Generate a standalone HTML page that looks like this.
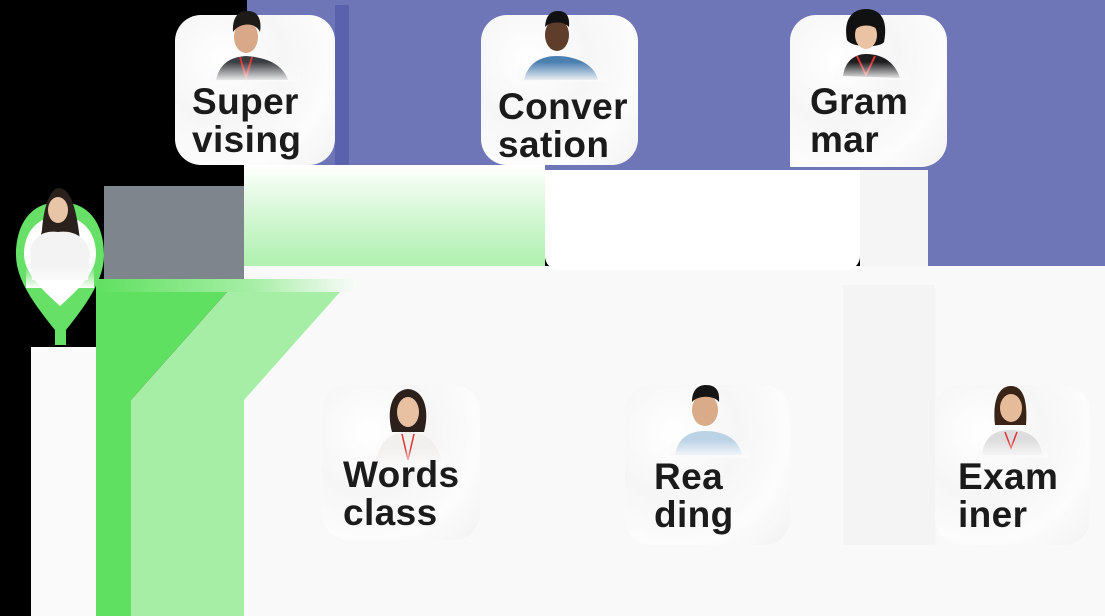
<!DOCTYPE html>
<html><head><meta charset="utf-8">
<style>
html,body{margin:0;padding:0;}
body{width:1105px;height:616px;overflow:hidden;background:#000;position:relative;font-family:"Liberation Sans",sans-serif;}
.a{position:absolute;}
.card{position:absolute;background:#fafafa;border-radius:26px;background-image:radial-gradient(circle at 30% 30%,#fff 0,#f6f6f6 40%,#fcfcfc 70%,#f2f2f2 100%);}
.t{position:absolute;font-weight:bold;font-size:37px;line-height:38px;color:#1b1b1b;letter-spacing:0.4px;}
</style></head><body>
<div class="a" style="left:247px;top:0;width:858px;height:176px;background:#6e76b8"></div>
<div class="a" style="left:928px;top:0;width:177px;height:268px;background:#6e76b8"></div>
<div class="a" style="left:335px;top:5px;width:14px;height:165px;background:#5a61ad"></div>
<div class="a" style="left:104px;top:186px;width:150px;height:93px;background:#7f858c;border-radius:0 0 8px 0"></div>
<div class="a" style="left:244px;top:165px;width:301px;height:114px;background:linear-gradient(#fff,#d8f7d8 40%,#a6eea6)"></div>
<div class="a" style="left:545px;top:170px;width:315px;height:100px;background:#fff;border-radius:0 0 14px 14px"></div>
<div class="a" style="left:860px;top:170px;width:68px;height:100px;background:#f5f5f5"></div>
<div class="a" style="left:244px;top:266px;width:861px;height:350px;background:#f9f9f9"></div>
<div class="a" style="left:545px;top:170px;width:315px;height:100px;background:#fff;border-radius:0 0 14px 14px"></div>
<div class="a" style="left:843px;top:285px;width:92px;height:260px;background:#f4f4f4"></div>
<div class="a" style="left:96px;top:279px;width:260px;height:13px;background:linear-gradient(90deg,#60e060,#a6eea6 60%,#fafafa)"></div>
<svg class="a" style="left:0;top:0" width="1105" height="616">
<polygon points="96,292 227,292 131,400 131,616 96,616" fill="#60e060"/>
<polygon points="227,292 340,292 244,400 244,616 131,616 131,400" fill="#a6eea6"/>
</svg>
<div class="a" style="left:31px;top:347px;width:65px;height:269px;background:#fafafa"></div>
<svg class="a" style="left:0;top:180px" width="130" height="180">
<defs><linearGradient id="pf" x1="0" y1="0" x2="0" y2="1"><stop offset="0" stop-color="#fff" stop-opacity="0"/><stop offset="1" stop-color="#fff"/></linearGradient></defs>
<path d="M60 22 C30 22 16 45 16 75 C16 100 35 125 55 150 L55 165 L66 165 L66 150 C86 125 104 100 104 75 C104 45 90 22 60 22Z" fill="#66e066"/>
<path d="M60 36 C38 36 24 52 24 74 C24 92 40 108 60 126 C80 108 96 92 96 74 C96 52 82 36 60 36Z" fill="#fff"/>
<path d="M42 50 C44 25 50 10 58 8 C70 8 76 25 80 60 L86 90 L34 90Z" fill="#2a211d"/>
<ellipse cx="58" cy="30" rx="10" ry="13" fill="#e9c5a8"/>
<path d="M30 70 C34 55 46 50 58 52 C72 50 86 56 90 72 L88 100 L32 100Z" fill="#f3f3f3"/>
<rect x="26" y="86" width="68" height="22" fill="url(#pf)"/>
</svg>
<div class="card" style="left:175px;top:15px;width:160px;height:150px"></div>
<div class="card" style="left:481px;top:15px;width:157px;height:150px"></div>
<div class="card" style="left:790px;top:15px;width:157px;height:152px;border-radius:26px 26px 26px 0"></div>
<div class="card" style="left:322px;top:385px;width:158px;height:155px"></div>
<div class="card" style="left:625px;top:385px;width:165px;height:160px"></div>
<div class="card" style="left:935px;top:385px;width:155px;height:160px"></div>
<svg class="a" style="left:0;top:0" width="1105" height="616">
<path d="M216 80 C220 62 232 57 246 56 C262 57 282 62 288 80Z" fill="#3a3d42"/>
<path d="M240 57 L246 78 L252 57" stroke="#d33" stroke-width="2" fill="none"/>
<ellipse cx="246" cy="37" rx="12" ry="16" fill="#d8a888"/>
<path d="M233 32 C232 16 240 10 248 11 C258 11 262 20 260 32 C256 22 240 22 233 32Z" fill="#1e1a18"/>
<path d="M524 80 C528 62 542 56 557 56 C572 56 594 62 598 80Z" fill="#4a7fb0"/>
<ellipse cx="557" cy="35" rx="12" ry="16" fill="#5e3e2a"/>
<path d="M545 27 C546 14 552 11 558 11 C566 11 570 16 569 27 C564 21 550 21 545 27Z" fill="#111"/>
<path d="M843 76 C845 60 856 54 866 54 C880 54 894 60 900 78Z" fill="#1d1d1f"/>
<path d="M857 56 L866 75 L875 56" stroke="#d33" stroke-width="2" fill="none"/>
<path d="M847 40 C843 20 852 9 866 9 C882 9 888 22 884 42 C880 48 852 48 847 40Z" fill="#111"/>
<ellipse cx="866" cy="35" rx="11" ry="14" fill="#eac3a4"/>
<path d="M855 30 C856 20 862 18 868 18 C876 18 878 22 878 30 C872 24 860 24 855 30Z" fill="#111"/>
<path d="M376 465 C378 440 392 432 408 432 C424 432 438 440 442 465Z" fill="#f2f0ee"/>
<path d="M392 432 C386 410 392 390 408 389 C424 390 430 410 424 432Z" fill="#2b201b"/>
<ellipse cx="408" cy="412" rx="11" ry="15" fill="#e8c0a2"/>
<path d="M402 434 L408 460 L414 434" stroke="#d33" stroke-width="1.5" fill="none"/>
<path d="M675 455 C678 437 690 431 705 431 C722 431 738 437 742 455Z" fill="#bcd3e6"/>
<ellipse cx="705" cy="410" rx="13" ry="16" fill="#d9ab88"/>
<path d="M692 402 C692 390 698 385 706 385 C716 385 720 391 719 402 C714 395 698 395 692 402Z" fill="#151515"/>
<path d="M982 455 C984 436 996 430 1010 430 C1026 430 1040 436 1042 455Z" fill="#ddd"/>
<path d="M995 425 C992 398 1000 386 1011 386 C1022 386 1028 398 1026 425Z" fill="#3a2418"/>
<ellipse cx="1011" cy="408" rx="11" ry="14" fill="#e6bb9a"/>
<path d="M1005 432 L1011 448 L1017 432" stroke="#d33" stroke-width="1.5" fill="none"/>
</svg>
<div class="a" style="left:210px;top:62px;width:90px;height:20px;background:linear-gradient(rgba(255,255,255,0),#fafafa)"></div>
<div class="a" style="left:518px;top:62px;width:90px;height:20px;background:linear-gradient(rgba(255,255,255,0),#fafafa)"></div>
<div class="a" style="left:835px;top:62px;width:75px;height:18px;background:linear-gradient(rgba(255,255,255,0),#fafafa)"></div>
<div class="a" style="left:370px;top:448px;width:80px;height:18px;background:linear-gradient(rgba(255,255,255,0),#fafafa)"></div>
<div class="a" style="left:670px;top:440px;width:80px;height:18px;background:linear-gradient(rgba(255,255,255,0),#fafafa)"></div>
<div class="a" style="left:978px;top:440px;width:70px;height:18px;background:linear-gradient(rgba(255,255,255,0),#fafafa)"></div>
<div class="t" style="left:192px;top:83px">Super<br>vising</div>
<div class="t" style="left:498px;top:88px">Conver<br>sation</div>
<div class="t" style="left:810px;top:83px">Gram<br>mar</div>
<div class="t" style="left:343px;top:456px">Words<br>class</div>
<div class="t" style="left:654px;top:458px">Rea<br>ding</div>
<div class="t" style="left:958px;top:458px">Exam<br>iner</div>
</body></html>
